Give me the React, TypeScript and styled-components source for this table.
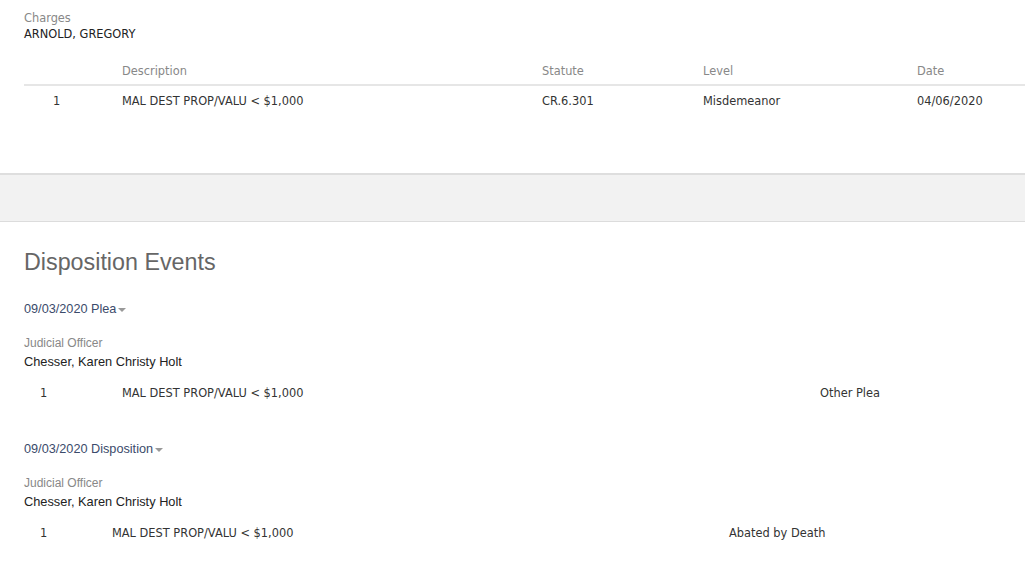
import styled, { createGlobalStyle } from "styled-components";

const GlobalStyle = createGlobalStyle`
  body {
    margin: 0;
    background: #fff;
    font-family: "DejaVu Sans", Verdana, sans-serif;
    color: #222;
  }
`;

const Page = styled.div`
  width: 1025px;
  overflow: hidden;
`;

const ChargesSection = styled.section`
  height: 173px;
  padding: 11px 0 0 24px;
  box-sizing: border-box;
`;

const Label = styled.div`
  font-size: 11.4px;
  line-height: 14px;
  color: #888;
`;

const Party = styled.div`
  font-size: 11.4px;
  line-height: 14px;
  margin-top: 2px;
  color: #222;
`;

const ChargeGrid = styled.div`
  margin-top: 18px;
  display: grid;
  grid-template-columns: 98px 420px 161px 214px 1fr;
  font-size: 11.4px;
  line-height: 14px;
`;

const HeadCell = styled.div`
  color: #888;
  padding: 5px 0 6px;
  border-bottom: 2px solid #e6e6e6;
`;

const Cell = styled.div<{ $pad?: number }>`
  color: #333;
  padding: 8px 0 5px ${(p) => p.$pad ?? 0}px;
`;

const Band = styled.div`
  height: 46px;
  background: #f2f2f2;
  border-top: 2px solid #dedede;
  border-bottom: 1px solid #dcdcdc;
`;

const Events = styled.section`
  padding: 26px 0 0 24px;
`;

const Heading = styled.h2`
  margin: 0;
  font-family: "Liberation Sans", Arial, sans-serif;
  font-weight: normal;
  font-size: 23.3px;
  line-height: 28px;
  color: #666;
`;

const Event = styled.div<{ $first?: boolean }>`
  margin-top: ${(p) => (p.$first ? 26 : 42)}px;
`;

const EventTitle = styled.div`
  display: flex;
  align-items: center;
  font-family: "Liberation Sans", Arial, sans-serif;
  font-size: 12.7px;
  line-height: 15px;
  color: #3b4b6b;
`;

const Caret = styled.span`
  width: 0;
  height: 0;
  margin-left: 2px;
  margin-top: 1px;
  border-left: 4px solid transparent;
  border-right: 4px solid transparent;
  border-top: 4px solid #999;
`;

const OfficerLabel = styled.div`
  margin-top: 19px;
  font-family: "Liberation Sans", Arial, sans-serif;
  font-size: 12px;
  line-height: 14px;
  color: #888;
`;

const OfficerName = styled.div`
  margin-top: 3px;
  font-family: "Liberation Sans", Arial, sans-serif;
  font-size: 12.8px;
  line-height: 17px;
  color: #222;
`;

const EventRow = styled.div<{ $cols: string }>`
  margin-top: 16px;
  display: grid;
  grid-template-columns: ${(p) => p.$cols};
  font-size: 11.4px;
  line-height: 14px;
  color: #333;
`;

const NumCell = styled.div`
  padding-left: 16px;
`;

const events = [
  {
    title: "09/03/2020 Plea",
    officer: "Chesser, Karen Christy Holt",
    cols: "98px 698px 1fr",
    outcome: "Other Plea",
  },
  {
    title: "09/03/2020 Disposition",
    officer: "Chesser, Karen Christy Holt",
    cols: "88px 617px 1fr",
    outcome: "Abated by Death",
  },
];

export default function App() {
  return (
    <Page>
      <GlobalStyle />
      <ChargesSection>
        <Label>Charges</Label>
        <Party>ARNOLD, GREGORY</Party>
        <ChargeGrid>
          <HeadCell />
          <HeadCell>Description</HeadCell>
          <HeadCell>Statute</HeadCell>
          <HeadCell>Level</HeadCell>
          <HeadCell>Date</HeadCell>
          <Cell $pad={29}>1</Cell>
          <Cell>MAL DEST PROP/VALU &lt; $1,000</Cell>
          <Cell>CR.6.301</Cell>
          <Cell>Misdemeanor</Cell>
          <Cell>04/06/2020</Cell>
        </ChargeGrid>
      </ChargesSection>
      <Band />
      <Events>
        <Heading>Disposition Events</Heading>
        {events.map((ev, i) => (
          <Event key={ev.title} $first={i === 0}>
            <EventTitle>
              {ev.title}
              <Caret />
            </EventTitle>
            <OfficerLabel>Judicial Officer</OfficerLabel>
            <OfficerName>{ev.officer}</OfficerName>
            <EventRow $cols={ev.cols}>
              <NumCell>1</NumCell>
              <div>MAL DEST PROP/VALU &lt; $1,000</div>
              <div>{ev.outcome}</div>
            </EventRow>
          </Event>
        ))}
      </Events>
    </Page>
  );
}
